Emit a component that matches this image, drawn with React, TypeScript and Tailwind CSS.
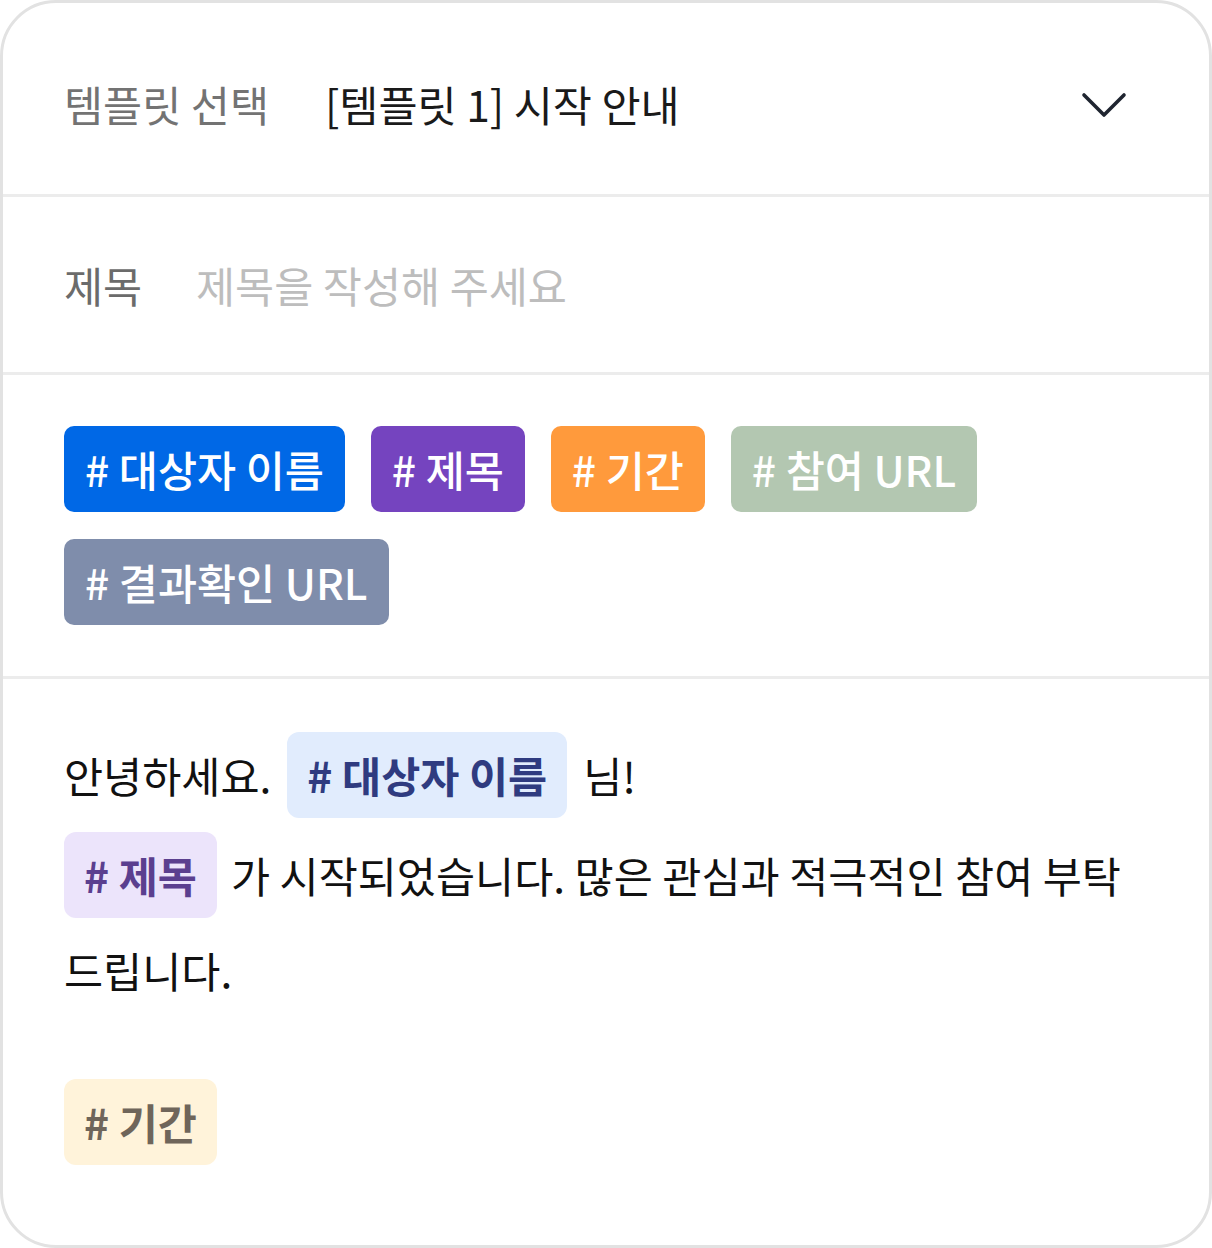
import React from 'react';

const FONT = { fontFamily: '"Noto Sans CJK KR", "Noto Sans", sans-serif' };

const tags = [
  { label: '# 대상자 이름', cls: 'bg-[#0068e6]' },
  { label: '# 제목', cls: 'bg-[#7544bf]' },
  { label: '# 기간', cls: 'bg-[#ff9a3c]' },
  { label: '# 참여 URL', cls: 'bg-[#b3c7b1]' },
  { label: '# 결과확인 URL', cls: 'bg-[#7f8dab]' },
];

function Chip({ label, cls }: { label: string; cls: string }) {
  return (
    <span className={`inline-flex items-center h-[86px] px-[20px] rounded-[12px] text-[42.5px] font-semibold leading-none ${cls}`}>
      {label}
    </span>
  );
}

export default function App() {
  return (
    <div style={FONT} className="w-[1212px] h-[1248px] bg-white">
      <div className="h-full border-[3px] border-[#e2e2e2] rounded-[56px] overflow-hidden flex flex-col">
        {/* 템플릿 선택 */}
        <div className="h-[194px] shrink-0 flex items-center pt-[12px] pl-[61px] pr-[82px] border-b-[3px] border-[#ececec]">
          <span className="w-[261px] text-[42.5px] leading-none text-[#737373]">템플릿 선택</span>
          <span className="flex-1 text-[42.5px] leading-none text-[#1a1a1a]">[템플릿 1] 시작 안내</span>
          <svg width="46" height="28" viewBox="0 0 46 28" fill="none">
            <polyline points="3,4 23,24 43,4" stroke="#1f2530" strokeWidth="3.6" strokeLinecap="round" strokeLinejoin="round" />
          </svg>
        </div>

        {/* 제목 */}
        <div className="h-[178px] shrink-0 flex items-center pt-[2px] pl-[61px] border-b-[3px] border-[#ececec]">
          <span className="w-[132px] text-[42.5px] leading-none text-[#6b6b6b]">제목</span>
          <span className="text-[42.5px] leading-none text-[#bdbdbd]">제목을 작성해 주세요</span>
        </div>

        {/* 변수 태그 */}
        <div className="shrink-0 pl-[61px] pr-[40px] pt-[51px] pb-[51px] border-b-[3px] border-[#ececec]">
          <div className="flex flex-wrap gap-x-[26px] gap-y-[27px]">
            {tags.map(t => (
              <span key={t.label} className={`inline-flex items-center h-[86px] px-[21px] rounded-[10px] text-[42.5px] font-medium leading-none text-white ${t.cls}`}>
                {t.label}
              </span>
            ))}
          </div>
        </div>

        {/* 본문 */}
        <div className="flex-1 pl-[61px] pt-[46px] text-[42.5px] leading-none text-[#111111]">
          <div className="h-[100px] flex items-center gap-[16px]">
            <span>안녕하세요.</span>
            <Chip label="# 대상자 이름" cls="bg-[#e1ecfd] text-[#2f3b80]" />
            <span>님!</span>
          </div>
          <div className="h-[100px] flex items-center gap-[14px]">
            <Chip label="# 제목" cls="bg-[#ece4fb] text-[#5b3f8f]" />
            <span>가 시작되었습니다. 많은 관심과 적극적인 참여 부탁</span>
          </div>
          <div className="h-[90px] flex items-center">
            <span>드립니다.</span>
          </div>
          <div className="h-[64px]" />
          <div className="h-[86px] flex items-center">
            <Chip label="# 기간" cls="bg-[#fff3da] text-[#6f655a]" />
          </div>
        </div>
      </div>
    </div>
  );
}
